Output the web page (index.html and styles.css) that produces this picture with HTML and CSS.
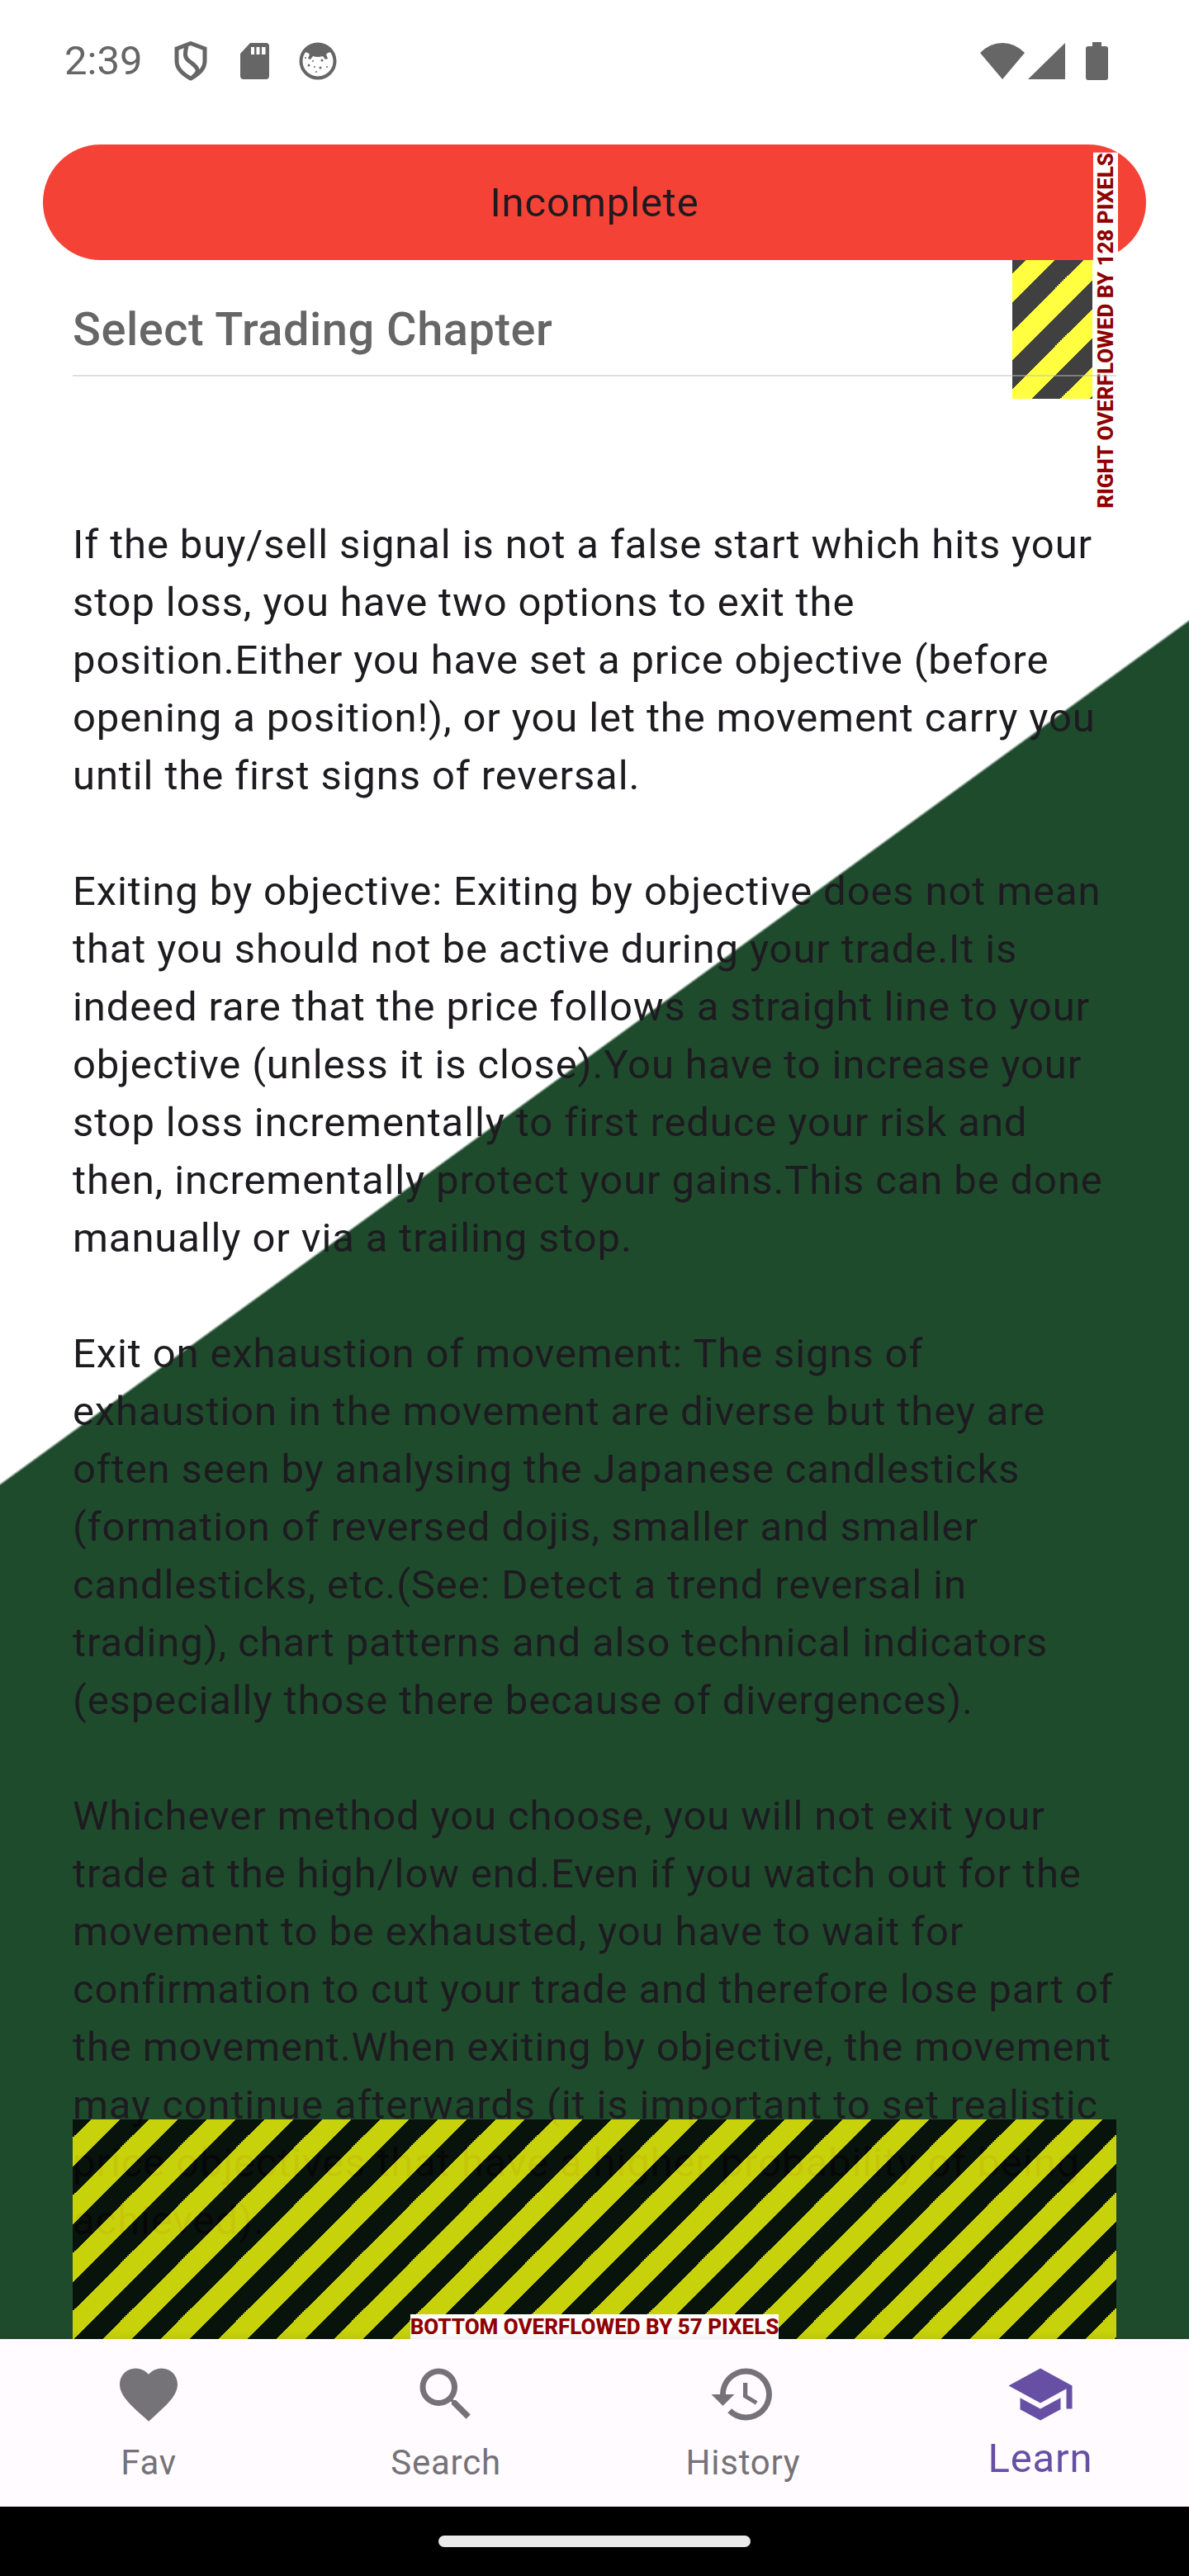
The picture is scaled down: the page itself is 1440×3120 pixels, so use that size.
FILE: index.html
```html
<!DOCTYPE html>
<html lang="en">
<head>
<meta charset="utf-8">
<meta name="viewport" content="width=device-width, initial-scale=1">
<title>Learn</title>
<link rel="stylesheet" href="styles.css">
</head>
<body>
<div class="app">
  <div class="screen">
    <header class="status">
      <div class="status-left">
        <time>2:39</time>
        <svg class="status-icon" viewBox="0 0 48 48" aria-hidden="true"><path d="M24 2.500 41 9V24Q41 36 24 45Q7 36 7 24V9ZM19 6C15 20 19 22 26 27C33 33 35 36 27 43" fill="none" stroke="currentColor" stroke-width="5"/></svg>
        <svg class="status-icon" viewBox="0 0 48 48" aria-hidden="true"><path fill-rule="evenodd" d="M19 2H38Q42 2 42 6V42Q42 46 38 46H11Q7 46 7 42V15ZM20 7V16H24V7ZM26.500 7V16H30.500V7ZM33 7V16H37.500V7Z" fill="currentColor"/></svg>
        <svg class="status-icon" viewBox="0 0 48 48" aria-hidden="true"><circle cx="24" cy="24" r="20.500" fill="none" stroke="currentColor" stroke-width="4"/><path d="M8 13Q24-8 40 13L36 14 34 16 36 21 33 22 30 18Q24 20 18 18L15 22 12 21 14 16 12 14Z" fill="currentColor"/><g fill="currentColor"><circle cx="18" cy="24" r="1"/><circle cx="29" cy="23" r="1.500"/><circle cx="13" cy="29" r="1.500"/><circle cx="27" cy="32" r="1.500"/><circle cx="9" cy="20" r="1"/><circle cx="35" cy="31" r="1"/><circle cx="20" cy="31" r="1"/><circle cx="22" cy="37" r="1"/></g></svg>
      </div>
      <div class="status-right">
        <svg class="wifi" viewBox="0 0 54 46" aria-hidden="true"><path d="M27 45 0 13Q12 1 27 1T54 13Z" fill="currentColor"/></svg>
        <svg class="signal" viewBox="0 0 45 46" aria-hidden="true"><path d="M45 1V45H0Z" fill="currentColor"/></svg>
        <svg class="battery" viewBox="0 0 27 46" aria-hidden="true"><path d="M8 0H19V5H24Q27 5 27 8V43Q27 46 24 46H3Q0 46 0 43V8Q0 5 3 5H8Z" fill="currentColor"/></svg>
      </div>
    </header>

    <main>
      <button class="progress" type="button">Incomplete</button>

      <div class="chapter">
        <div class="stripes stripes-right"></div>
        <span class="warning warning-right">RIGHT OVERFLOWED BY 128 PIXELS</span>
        <select class="chapter-select" aria-label="Select Trading Chapter">
          <option>Select Trading Chapter</option>
        </select>
      </div>

      <article class="lesson">
        <p>If the buy/sell signal is not a false start which hits your stop loss, you have two options to exit the position.Either you have set a price objective (before opening a position!), or you let the movement carry you until the first signs of reversal.</p>
        <p>Exiting by objective: Exiting by objective does not mean that you should not be active during your trade.It is indeed rare that the price follows a straight line to your objective (unless it is close).You have to increase your stop loss incrementally to first reduce your risk and then, incrementally protect your gains.This can be done manually or via a trailing stop.</p>
        <p>Exit on exhaustion of movement: The signs of exhaustion in the movement are diverse but they are often seen by analysing the Japanese candlesticks (formation of reversed dojis, smaller and smaller candlesticks, etc.(See: Detect a trend reversal in trading), chart patterns and also technical indicators (especially those there because of divergences).</p>
        <p>Whichever method you choose, you will not exit your trade at the high/low end.Even if you watch out for the movement to be exhausted, you have to wait for confirmation to cut your trade and therefore lose part of the movement.When exiting by objective, the movement may continue afterwards (it is important to set realistic price objectives that have a higher probability of being achieved).</p>
      </article>
    </main>

    <div class="stripes stripes-bottom">
      <span class="warning">BOTTOM OVERFLOWED BY 57 PIXELS</span>
    </div>
  </div>

  <nav class="tabs">
    <a class="tab" href="#fav">
      <svg class="tab-icon" viewBox="0 0 24 24" aria-hidden="true"><path d="M12 21.350l-1.450-1.320C5.400 15.360 2 12.280 2 8.500 2 5.420 4.420 3 7.500 3c1.740 0 3.410.810 4.500 2.090C13.090 3.810 14.760 3 16.500 3 19.580 3 22 5.420 22 8.500c0 3.780-3.400 6.860-8.550 11.540z" fill="currentColor"/></svg>
      <span class="tab-label">Fav</span>
    </a>
    <a class="tab" href="#search">
      <svg class="tab-icon" viewBox="0 0 24 24" aria-hidden="true"><path d="M15.500 14h-.79l-.28-.27A6.471 6.471 0 0 0 16 9.500 6.500 6.500 0 1 0 9.500 16c1.610 0 3.090-.59 4.230-1.570l.27.280v.79l5 4.990L20.490 19zm-6 0C7.010 14 5 11.990 5 9.500S7.010 5 9.500 5 14 7.010 14 9.500 11.990 14 9.500 14z" fill="currentColor"/></svg>
      <span class="tab-label">Search</span>
    </a>
    <a class="tab" href="#history">
      <svg class="tab-icon" viewBox="0 0 24 24" aria-hidden="true"><path d="M13 3a9 9 0 0 0-9 9H1l3.890 3.890.070.140L9 12H6c0-3.870 3.130-7 7-7s7 3.130 7 7-3.130 7-7 7c-1.930 0-3.680-.79-4.940-2.060l-1.420 1.420A8.954 8.954 0 0 0 13 21a9 9 0 0 0 0-18zm-1 5v5l4.280 2.540.720-1.210-3.500-2.080V8z" fill="currentColor"/></svg>
      <span class="tab-label">History</span>
    </a>
    <a class="tab tab-active" href="#learn" aria-current="page">
      <svg class="tab-icon" viewBox="0 0 24 24" aria-hidden="true"><path d="M5 13.180v4L12 21l7-3.820v-4L12 17l-7-3.820zM12 3 1 9l11 6 9-4.910V17h2V9L12 3z" fill="currentColor"/></svg>
      <span class="tab-label">Learn</span>
    </a>
  </nav>
  <div class="gesture"><div class="gesture-pill"></div></div>
</div>
</body>
</html>
```
FILE: styles.css
```css
* {
  box-sizing: border-box;
}

body {
  margin: 0;
  font-family: Roboto, "Liberation Sans", sans-serif;
  font-size: 49px;
  line-height: 70px;
  color: #1d1b20;
  background: #fff;
}

.app {
  display: flex;
  flex-direction: column;
  min-height: 100vh;
}

.screen {
  position: relative;
  flex: 1;
  background: linear-gradient(144deg, #fff 46.3%, #1f4b2d 46.4%);
}

/* Status bar */
.status {
  display: flex;
  justify-content: space-between;
  align-items: center;
  height: 147px;
  padding: 0 98px 0 78px;
  color: #666;
}

.status-left {
  display: flex;
  align-items: center;
  gap: 29px;
}

.status-left time {
  margin-right: 6px;
}

.status-icon {
  width: 48px;
  height: 48px;
}

.status-right {
  display: flex;
  align-items: center;
}

.wifi {
  width: 54px;
  height: 46px;
}

.signal {
  width: 45px;
  height: 46px;
  margin: 0 25px 0 4px;
}

.battery {
  width: 27px;
  height: 46px;
}

/* Progress button */
main {
  padding: 28px 52px 107px;
}

.progress {
  display: block;
  width: 100%;
  height: 140px;
  padding: 2px 0 0;
  border: 0;
  border-radius: 70px;
  background: #f44336;
  color: inherit;
  font: inherit;
  letter-spacing: 0.018em;
}

/* Chapter picker */
.chapter {
  position: relative;
  height: 168px;
  margin: 0 36px;
}

.chapter::after {
  content: "";
  position: absolute;
  left: 0;
  right: 0;
  bottom: 27px;
  height: 2px;
  background: rgba(189, 189, 189, 0.5);
}

.chapter-select {
  position: relative;
  width: 100%;
  height: 100%;
  padding: 0;
  border: 0;
  appearance: none;
  background: transparent;
  color: #666;
  font: 500 56px/84px Roboto, "Liberation Sans", sans-serif;
  letter-spacing: 0.009em;
}

/* Overflow markers */
.stripes {
  position: absolute;
  background-image: linear-gradient(135deg,
    rgba(0, 0, 0, 0.75) 25%, rgba(255, 255, 0, 0.75) 25% 50%,
    rgba(0, 0, 0, 0.75) 50% 75%, rgba(255, 255, 0, 0.75) 75%);
  background-size: 70px 70px;
}

.stripes-right {
  top: 0;
  right: 29px;
  bottom: 0;
  width: 97px;
  background-position: -19px 0;
}

.stripes-bottom {
  left: 88px;
  right: 88px;
  bottom: 0;
  height: 266px;
  display: flex;
  justify-content: center;
  align-items: flex-end;
  background-position: -13px 0;
}

.warning {
  background: #fff;
  color: #900000;
  font-size: 26px;
  font-weight: 800;
  line-height: 30px;
  white-space: nowrap;
}

.warning-right {
  position: absolute;
  right: -2px;
  bottom: -133px;
  writing-mode: vertical-rl;
  transform: rotate(180deg);
}

/* Lesson text */
.lesson {
  margin: 142px 36px 0;
  letter-spacing: 0.018em;
}

.lesson p {
  margin: 0 0 70px;
}

.lesson p:last-child {
  margin: 0;
}

/* Bottom tabs */
.tabs {
  position: relative;
  display: flex;
  height: 203px;
  background: #fffbff;
  box-shadow: 0 0 10px rgba(0, 0, 0, 0.12);
}

.tab {
  flex: 1;
  display: flex;
  flex-direction: column;
  align-items: center;
  justify-content: space-between;
  padding: 25px 0 18px;
  color: #757377;
  text-decoration: none;
}

.tab-icon {
  width: 84px;
  height: 84px;
}

.tab-label {
  font-size: 42px;
  line-height: 70px;
  letter-spacing: 0.018em;
}

.tab-active {
  padding-bottom: 23px;
  color: #6750a4;
}

.tab-active .tab-label {
  font-size: 49px;
}

/* Gesture bar */
.gesture {
  display: flex;
  justify-content: center;
  align-items: center;
  height: 84px;
  background: #000;
}

.gesture-pill {
  width: 378px;
  height: 14px;
  border-radius: 7px;
  background: #eaeaea;
}
```
